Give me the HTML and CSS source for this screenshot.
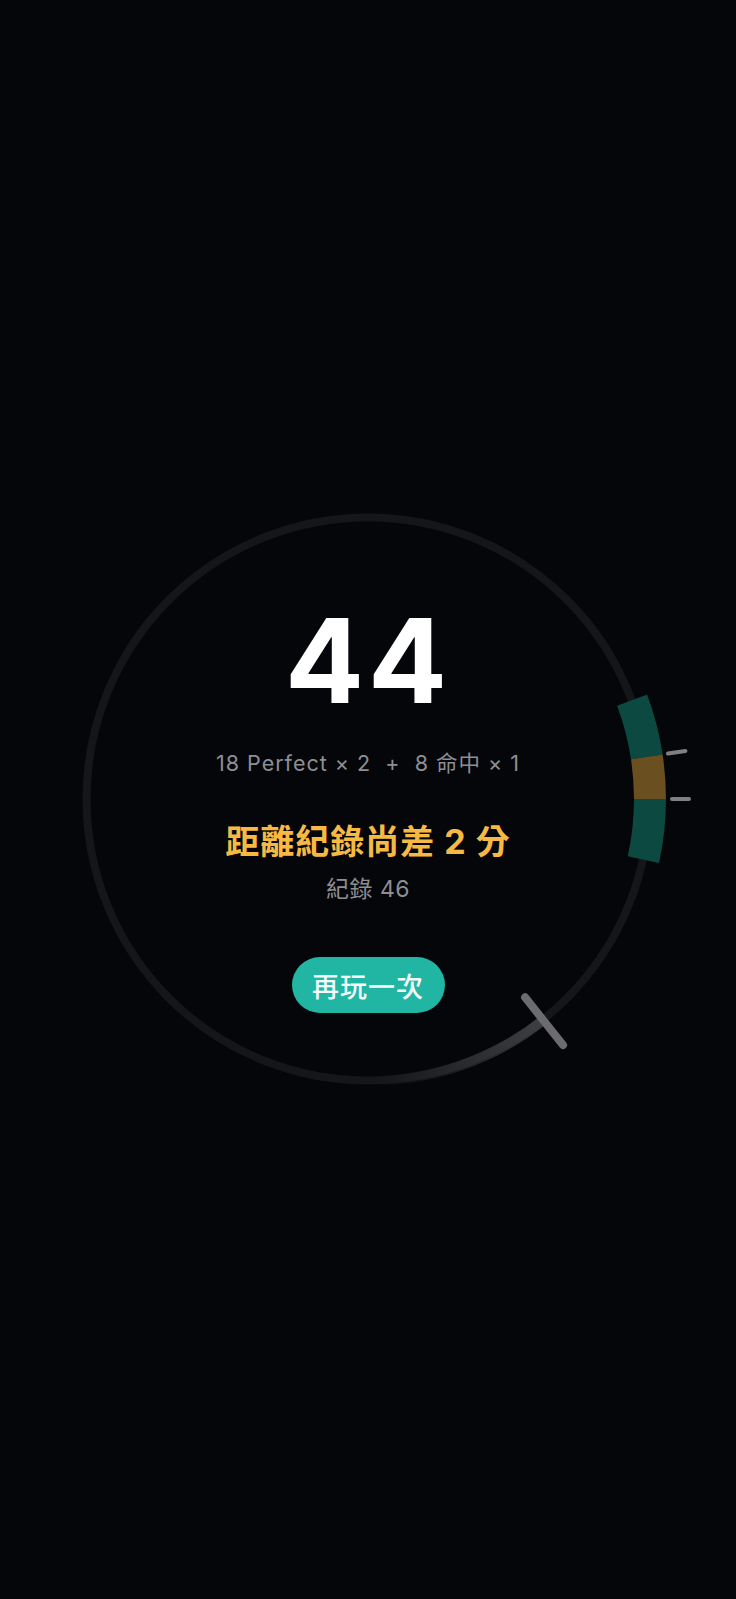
FILE: index.html
```html
<!DOCTYPE html>
<html lang="zh-Hant">

<head>
    <meta charset="UTF-8">
    <meta name="viewport" content="width=device-width, initial-scale=1.0">
    <title>節奏挑戰 結果</title>
    <link rel="stylesheet" href="styles.css">
</head>

<body>
    <main class="stage">
        <svg class="dial" viewBox="0 0 736 640" width="736" height="640" aria-hidden="true">
            <defs>
                <linearGradient id="trail" gradientUnits="userSpaceOnUse" x1="176" y1="220" x2="10" y2="282">
                    <stop offset="0" stop-color="#4a4a4c" stop-opacity="0.8"/>
                    <stop offset="1" stop-color="#4a4a4c" stop-opacity="0"/>
                </linearGradient>
            </defs>
            <g transform="translate(368 319)">
                <!-- track -->
                <circle class="track" r="281.5"/>
                <!-- sweep behind the needle -->
                <path class="trail" d="M 176 220.6 A 282 282 0 0 1 0 282"/>
                <!-- hit zone: good / perfect / good -->
                <path class="zone zone-good" d="M 264.1 -98.8 A 282 282 0 0 1 278.8 -42.2"/>
                <path class="zone zone-perfect" d="M 278.8 -42.2 A 282 282 0 0 1 282 0"/>
                <path class="zone zone-good" d="M 282 0 A 282 282 0 0 1 275.4 60.6"/>
                <line class="tick" x1="300" y1="-45.4" x2="317.4" y2="-48"/>
                <line class="tick" x1="304" y1="0" x2="321" y2="0"/>
                <!-- needle -->
                <line class="needle" x1="157.1" y1="198.3" x2="195" y2="246.1"/>
            </g>
        </svg>

        <section class="result">
            <p class="score">44</p>
            <p class="breakdown">18 Perfect × 2 &nbsp;+&nbsp; 8 命中 × 1</p>
            <p class="gap">距離紀錄尚差 2 分</p>
            <p class="record">紀錄 46</p>
            <button class="again" type="button">再玩一次</button>
        </section>
    </main>
</body>

</html>
```

FILE: styles.css
```css
html {
    color-scheme: dark;
}

body {
    margin: 0;
    background: #05060a;
    color: #fff;
    font-family: Inter, "Noto Sans CJK TC", sans-serif;
}

p {
    margin: 0;
}

.stage {
    position: relative;
    height: 640px;
    margin-top: 480px;
}

.dial {
    position: absolute;
    inset: 0;
}

.track {
    fill: none;
    stroke: #151619;
    stroke-width: 8;
}

.trail {
    fill: none;
    stroke: url(#trail);
    stroke-width: 10;
}

.zone {
    fill: none;
    stroke-width: 32;
}

.zone-good {
    stroke: #0c4a41;
}

.zone-perfect {
    stroke: #6a5021;
}

.tick {
    stroke: #808082;
    stroke-width: 4;
    stroke-linecap: round;
}

.needle {
    stroke: #6c6c6e;
    stroke-width: 8;
    stroke-linecap: round;
}

.result {
    position: relative;
    display: flex;
    flex-direction: column;
    align-items: center;
    padding-top: 122px;
}

.score {
    font-size: 117px;
    line-height: 117px;
    font-weight: 700;
    letter-spacing: 4px;
}

.breakdown {
    margin-top: 31px;
    font-size: 21.5px;
    line-height: 26px;
    letter-spacing: 1px;
    color: #8e8e93;
}

.gap {
    margin-top: 46px;
    font-size: 34px;
    line-height: 40px;
    font-weight: 700;
    letter-spacing: 1px;
    color: #f5b944;
}

.record {
    margin-top: 13px;
    font-size: 23px;
    line-height: 28px;
    letter-spacing: 0.5px;
    color: #8e8e93;
}

.again {
    margin-top: 54px;
    width: 153px;
    height: 56px;
    border: 0;
    border-radius: 28px;
    background: #21b5a3;
    color: #f4fbfa;
    font: 500 27px Inter, "Noto Sans CJK TC", sans-serif;
    letter-spacing: 1px;
}
```
